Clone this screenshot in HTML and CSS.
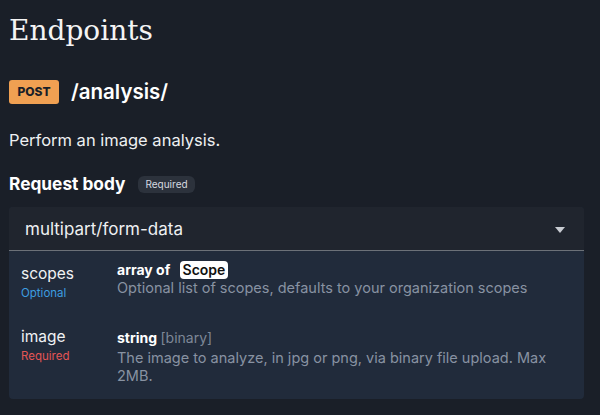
FILE: index.html
```html
<!DOCTYPE html>
<html>
<head>
<meta charset="utf-8">
<link rel="stylesheet" href="styles.css">
</head>
<body>
<main class="page">
  <h1 class="title">Endpoints</h1>
  <div class="endpoint">
    <span class="method">POST</span>
    <span class="path">/analysis/</span>
  </div>
  <p class="summary">Perform an image analysis.</p>
  <div class="body-head">
    <span class="body-title">Request body</span>
    <span class="req-badge">Required</span>
  </div>
  <section class="card">
    <div class="card-head">
      <span class="mime">multipart/form-data</span>
      <svg class="caret" width="10" height="6" viewBox="0 0 10 6"><path d="M0 0H10L5 6Z" fill="#c8ccd2"/></svg>
    </div>
    <div class="params">
      <div class="param param-ref">
        <div class="pname">
          <div class="name">scopes</div>
          <div class="flag optional">Optional</div>
        </div>
        <div class="pinfo">
          <div class="type">array of <span class="ref">Scope</span></div>
          <div class="desc">Optional list of scopes, defaults to your organization scopes</div>
        </div>
      </div>
      <div class="param">
        <div class="pname">
          <div class="name">image</div>
          <div class="flag required">Required</div>
        </div>
        <div class="pinfo">
          <div class="type">string <span class="fmt">[binary]</span></div>
          <div class="desc">The image to analyze, in jpg or png, via binary file upload. Max 2MB.</div>
        </div>
      </div>
    </div>
  </section>
</main>
</body>
</html>
```

FILE: styles.css
```css
* { box-sizing: border-box; }
html, body { margin: 0; padding: 0; }
body {
  background: #1a1f28;
  color: #ffffff;
  font-family: "Inter", "Lato", sans-serif;
  width: 600px;
  height: 415px;
  overflow: hidden;
}
.page {
  padding: 13px 16px 0 9px;
}
.title {
  font-family: "DejaVu Serif", "Liberation Serif", serif;
  font-weight: 400;
  font-size: 28px;
  line-height: 36px;
  margin: 0;
  color: #f4f4f4;
}
.endpoint {
  display: flex;
  align-items: center;
  gap: 12px;
  margin-top: 30px;
}
.method {
  background: #f0a052;
  color: #1a1f28;
  font-weight: 800;
  font-size: 12px;
  width: 50px;
  height: 24px;
  border-radius: 3px;
  display: flex;
  align-items: center;
  justify-content: center;
}
.path {
  font-size: 20.5px;
  font-weight: 600;
}
.summary {
  margin: 26px 0 0;
  font-size: 16.5px;
  line-height: 20px;
  color: #eef0f2;
}
.body-head {
  display: flex;
  align-items: center;
  gap: 13px;
  margin-top: 24px;
  height: 20px;
}
.body-title {
  font-size: 17.3px;
  line-height: 20px;
  font-weight: 700;
}
.req-badge {
  background: #2c323c;
  color: #d6dae0;
  font-size: 10px;
  height: 17px;
  padding: 0 7px;
  border-radius: 6px;
  display: flex;
  align-items: center;
}
.card {
  margin-top: 13px;
  width: 575px;
  border-radius: 4px;
  overflow: hidden;
  background: #212b3b;
}
.card-head {
  background: #20252e;
  height: 44px;
  border-bottom: 1px solid #6c7178;
  display: flex;
  align-items: center;
  justify-content: space-between;
  padding: 0 19px 0 16px;
}
.mime {
  font-size: 17px;
  color: #eef0f2;
}
.caret { display: block; margin-top: 2px; }
.params {
  padding: 13px 12px 14px;
  display: flex;
  flex-direction: column;
  gap: 25px;
}
.param {
  display: flex;
  align-items: flex-start;
}
.pname {
  width: 96px;
  flex: none;
}
.name {
  font-size: 15.5px;
  line-height: 20px;
  color: #f0f2f4;
}
.flag {
  font-size: 11.5px;
  line-height: 18px;
}
.optional { color: #3d9de0; }
.required { color: #e45555; }
.pinfo { flex: 1; }
.type {
  font-size: 14px;
  font-weight: 700;
  line-height: 22px;
}
.param-ref .pinfo { margin-top: -4px; }
.param-ref .type { line-height: 19px; }
.ref {
  display: inline-block;
  background: #ffffff;
  color: #111;
  border-radius: 4px;
  padding: 0 3px;
  margin-left: 6px;
  line-height: 18px;
  font-weight: 600;
}
.fmt {
  color: #7e8797;
  font-weight: 400;
}
.desc {
  font-size: 14.5px;
  line-height: 18px;
  color: #8892a2;
  max-width: 445px;
}
```
